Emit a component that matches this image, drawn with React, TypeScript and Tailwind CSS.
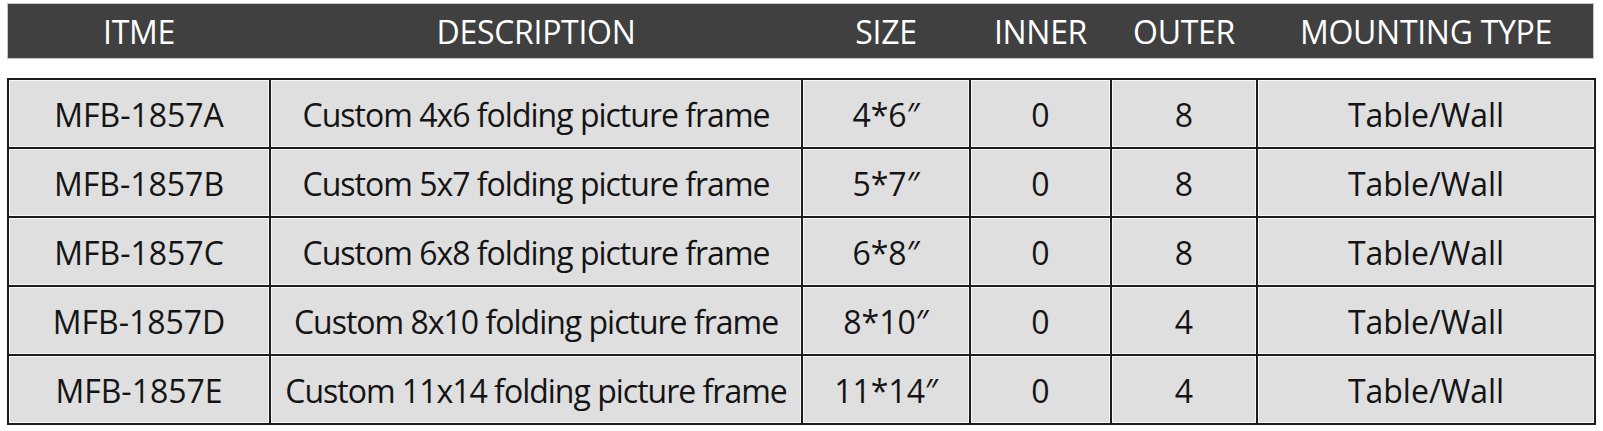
import React from 'react';

interface FrameRow {
    item: string;
    description: string;
    size: string;
    inner: string;
    outer: string;
    mounting: string;
}

const rows: FrameRow[] = [
    { item: 'MFB-1857A', description: 'Custom 4x6 folding picture frame', size: '4*6″', inner: '0', outer: '8', mounting: 'Table/Wall' },
    { item: 'MFB-1857B', description: 'Custom 5x7 folding picture frame', size: '5*7″', inner: '0', outer: '8', mounting: 'Table/Wall' },
    { item: 'MFB-1857C', description: 'Custom 6x8 folding picture frame', size: '6*8″', inner: '0', outer: '8', mounting: 'Table/Wall' },
    { item: 'MFB-1857D', description: 'Custom 8x10 folding picture frame', size: '8*10″', inner: '0', outer: '4', mounting: 'Table/Wall' },
    { item: 'MFB-1857E', description: 'Custom 11x14 folding picture frame', size: '11*14″', inner: '0', outer: '4', mounting: 'Table/Wall' },
];

const headers = ['ITME', 'DESCRIPTION', 'SIZE', 'INNER', 'OUTER', 'MOUNTING TYPE'];

const cols = 'grid grid-cols-[262px_532px_168px_141px_146px_338px]';

const App: React.FC = () => {
    return (
        <div
            className="w-[1603px] h-[431px] bg-white pt-[3px] pl-[7px]"
            style={{ fontFamily: '"Open Sans", "Noto Sans", sans-serif' }}
        >
            {/* Header bar */}
            <div className={`${cols} w-[1587px] h-[56px] bg-[#404040] border border-[#c4c4c4] text-white text-[32px] tracking-[-0.3px] items-center`}>
                {headers.map((h) => (
                    <div key={h} className="text-center leading-none pt-[1px]">
                        {h}
                    </div>
                ))}
            </div>

            {/* Table */}
            <table className="mt-[19px] w-[1587px] border-collapse table-fixed text-[32px] text-[#141414]">
                <colgroup>
                    <col className="w-[262px]" />
                    <col className="w-[532px]" />
                    <col className="w-[168px]" />
                    <col className="w-[141px]" />
                    <col className="w-[146px]" />
                    <col className="w-[338px]" />
                </colgroup>
                <tbody>
                    {rows.map((r) => (
                        <tr key={r.item} className="h-[69px]">
                            {[r.item, r.description, r.size, r.inner, r.outer, r.mounting].map((v, i) => (
                                <td
                                    key={i}
                                    className={`border-2 border-[#1c1c1c] bg-[#dfdfdf] text-center leading-none p-0 pt-[2px] shadow-[inset_1px_1px_0_#f7f7f7,inset_-1px_-1px_0_#f7f7f7] whitespace-nowrap ${i === 1 ? 'tracking-[-1px]' : ''}`}
                                >
                                    {v}
                                </td>
                            ))}
                        </tr>
                    ))}
                </tbody>
            </table>
        </div>
    );
};

export default App;
